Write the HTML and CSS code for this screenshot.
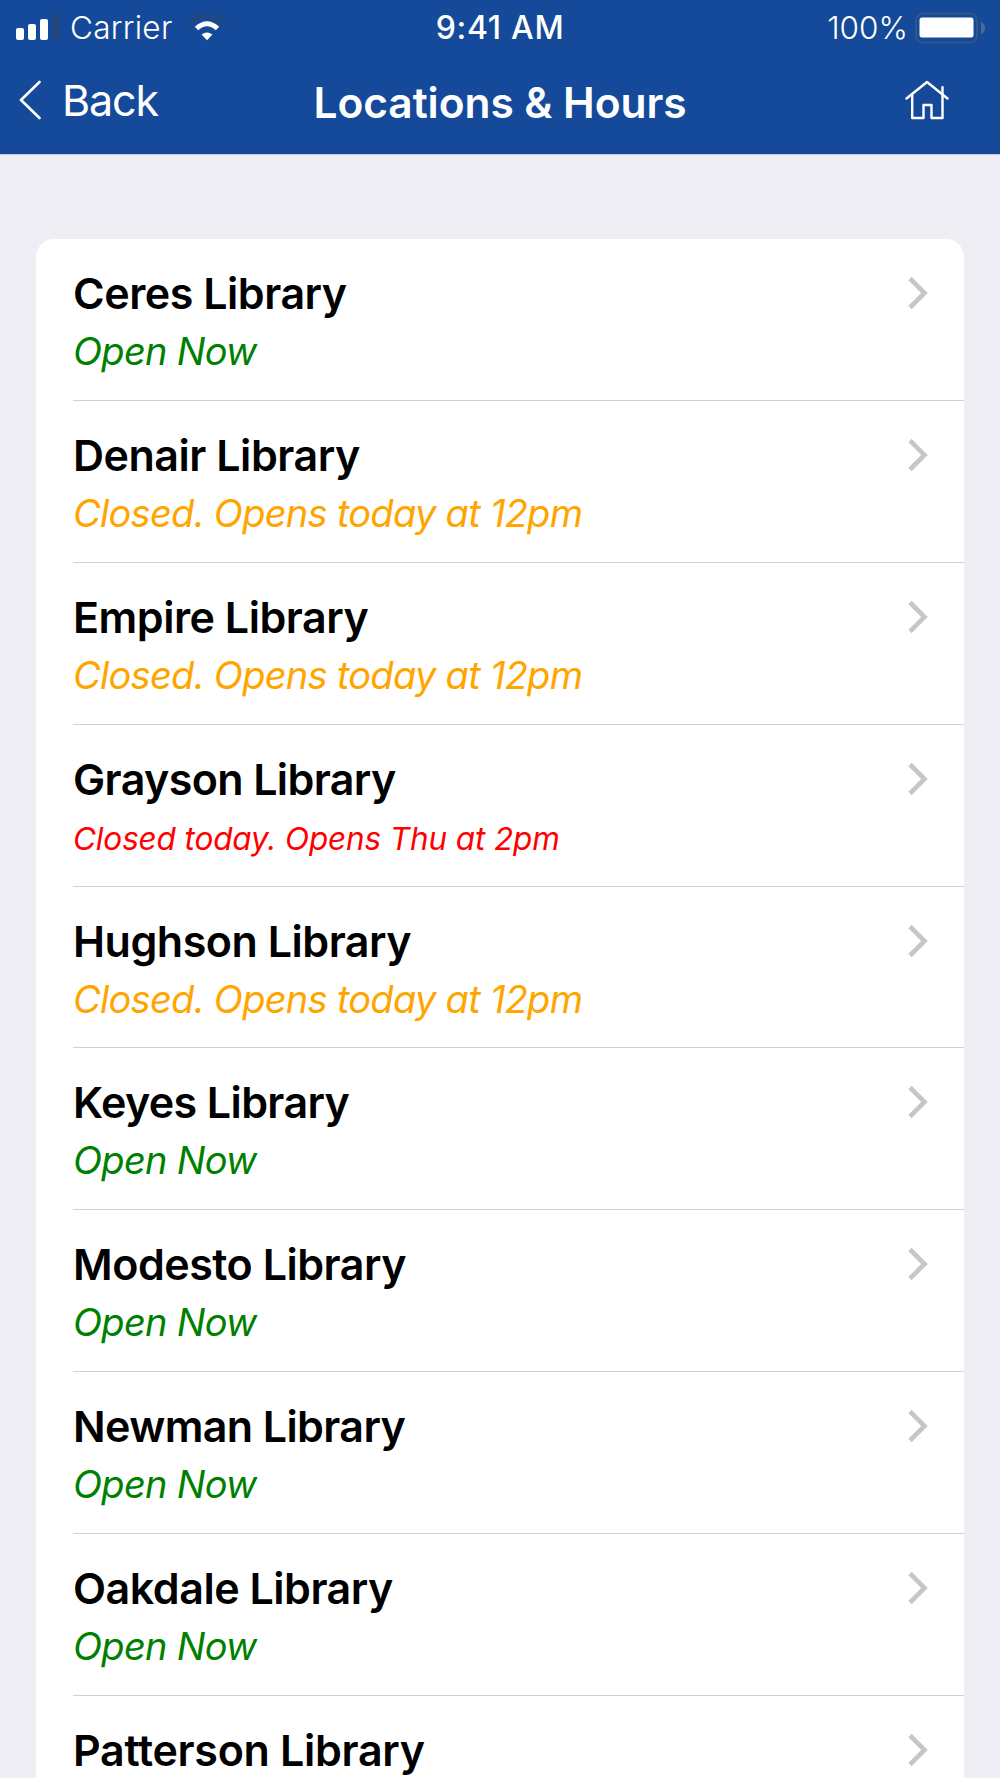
FILE: index.html
```html
<!DOCTYPE html>
<html lang="en">
<head>
<meta charset="utf-8">
<title>Locations &amp; Hours</title>
<link rel="stylesheet" href="styles.css">
</head>
<body>
<svg class="defs" width="0" height="0" aria-hidden="true">
  <symbol id="chevron" viewBox="0 0 20 34"><path d="M2 2.5 16.5 17 2 31.5" fill="none" stroke="#c5c5ca" stroke-width="4.6"/></symbol>
</svg>
<header class="top">
  <div class="status">
    <div class="status-left">
      <svg class="signal" width="46" height="28" viewBox="0 0 46 28">
        <rect x="0" y="14" width="8" height="12" rx="2" fill="#fff"/>
        <rect x="12" y="10" width="8" height="16" rx="2" fill="#fff"/>
        <rect x="24" y="5" width="8" height="21" rx="2" fill="#fff"/>
        <rect x="36" y="0" width="8" height="26" rx="2" fill="#24477f"/>
      </svg>
      <span class="carrier">Carrier</span>
      <svg class="wifi" width="38" height="28" viewBox="0 0 38 28">
        <path d="M2 9Q19-6 36 9" fill="none" stroke="#24477f" stroke-width="5.500"/>
        <path d="M8.500 14.500Q19 5 29.500 14.500" fill="none" stroke="#fff" stroke-width="5"/>
        <path d="M19 26.300 13.600 20.600Q19 16.300 24.400 20.600Z" fill="#fff"/>
      </svg>
    </div>
    <span class="time">9:41 AM</span>
    <div class="status-right">
      <span class="percent">100%</span>
      <svg class="battery" width="71" height="32" viewBox="0 0 71 32">
        <rect x="1" y="1.500" width="61" height="29" rx="7" fill="none" stroke="#34548a" stroke-width="2"/>
        <rect x="4.500" y="5.500" width="54" height="20" rx="2.500" fill="#fff"/>
        <path d="M66 9.500Q70 12 70 16T66 22.500Z" fill="#4a689b"/>
      </svg>
    </div>
  </div>
  <nav class="nav">
    <a class="back"><svg width="22" height="40" viewBox="0 0 22 40"><path d="M20.500 2 2 20 20.500 38" fill="none" stroke="#fff" stroke-width="2.600" stroke-linecap="round" stroke-linejoin="round"/></svg><span class="back-label">Back</span></a>
    <h1 class="heading">Locations &amp; Hours</h1>
    <a class="home"><svg width="44" height="40" viewBox="0 0 44 40"><g fill="none" stroke="#fff" stroke-width="2.400" stroke-linecap="round" stroke-linejoin="round"><path d="M1.500 18.500 22 2 42.500 18.500"/><path d="M7.200 15V38H18.500V25H26.500V38H37.500V7.200"/></g></svg></a>
  </nav>
</header>
<main class="list">
  <article class="row"><div><h2 class="name">Ceres Library</h2><p class="state open">Open Now</p></div><svg class="go"><use href="#chevron"/></svg></article>
  <article class="row"><div><h2 class="name">Denair Library</h2><p class="state later">Closed. Opens today at 12pm</p></div><svg class="go"><use href="#chevron"/></svg></article>
  <article class="row"><div><h2 class="name">Empire Library</h2><p class="state later">Closed. Opens today at 12pm</p></div><svg class="go"><use href="#chevron"/></svg></article>
  <article class="row"><div><h2 class="name tight">Grayson Library</h2><p class="state closed">Closed today. Opens Thu at 2pm</p></div><svg class="go"><use href="#chevron"/></svg></article>
  <article class="row"><div><h2 class="name">Hughson Library</h2><p class="state later">Closed. Opens today at 12pm</p></div><svg class="go"><use href="#chevron"/></svg></article>
  <article class="row"><div><h2 class="name tight">Keyes Library</h2><p class="state open">Open Now</p></div><svg class="go"><use href="#chevron"/></svg></article>
  <article class="row"><div><h2 class="name">Modesto Library</h2><p class="state open">Open Now</p></div><svg class="go"><use href="#chevron"/></svg></article>
  <article class="row"><div><h2 class="name tight">Newman Library</h2><p class="state open">Open Now</p></div><svg class="go"><use href="#chevron"/></svg></article>
  <article class="row"><div><h2 class="name">Oakdale Library</h2><p class="state open">Open Now</p></div><svg class="go"><use href="#chevron"/></svg></article>
  <article class="row"><div><h2 class="name wide">Patterson Library</h2></div><svg class="go"><use href="#chevron"/></svg></article>
</main>
</body>
</html>
```
FILE: styles.css
```css
* { box-sizing: border-box; }
body {
  margin: 0;
  height: 1778px;
  overflow: hidden;
  background: #efeef5;
  font-family: Inter, "Liberation Sans", sans-serif;
  color: #000;
}
h1, h2, p { margin: 0; font-weight: 400; white-space: nowrap; }
svg { display: block; flex: none; }
.defs { display: none; }
.top { height: 155px; background: #154a9a; border-bottom: 1px solid #c3c5d3; color: #fff; }
.status {
  display: grid;
  grid-template-columns: 1fr auto 1fr;
  align-items: center;
  height: 56px;
  padding: 0 14px;
  line-height: 56px;
}
.status-left, .status-right { display: flex; align-items: center; }
.status-left { padding-left: 2px; }
.status-right { justify-content: flex-end; }
.carrier { margin-left: 8px; font-weight: 300; font-size: 31.500px; letter-spacing: 0.300px; }
.wifi { margin-left: 15px; }
.time { font-weight: 450; font-size: 32px; letter-spacing: 0.700px; }
.percent { font-weight: 300; font-size: 31.500px; margin-right: 7px; }
.nav {
  display: grid;
  grid-template-columns: 1fr auto 1fr;
  align-items: center;
  height: 88px;
  padding: 0 19px;
}
.back { display: flex; align-items: center; gap: 21px; }
.back-label { font-size: 43px; line-height: 60px; letter-spacing: -1.100px; }
.heading { font-size: 42.500px; font-weight: 600; line-height: 60px; letter-spacing: -0.070px; padding-top: 5px; }
.home { justify-self: end; margin-right: 32px; }
.list {
  margin: 84px 36px 0;
  background: #fff;
  border-radius: 18px 18px 0 0;
}
.row {
  display: flex;
  justify-content: space-between;
  height: 161.900px;
  margin-left: 37px;
  padding: 29px 36px 0 0;
  border-bottom: 1px solid #d0d0d4;
}
.name { font-size: 43px; font-weight: 600; line-height: 50px; letter-spacing: -0.480px; }
.tight { letter-spacing: -0.620px; }
.wide { letter-spacing: -0.300px; }
.state { font-size: 38px; font-style: italic; line-height: 50px; padding-top: 8px; letter-spacing: -0.720px; }
.open { color: #008000; }
.later { color: #ffa500; }
.closed { color: #f00; font-size: 31.500px; padding-top: 10px; letter-spacing: -0.130px; }
.go { width: 20px; height: 34px; margin-top: 8px; }
```
